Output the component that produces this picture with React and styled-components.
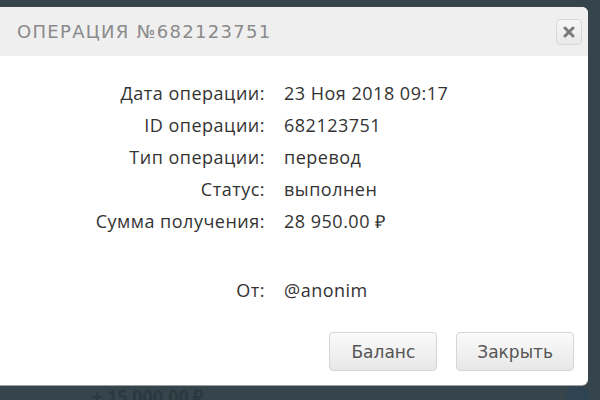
import React from "react"
import styled, { createGlobalStyle } from "styled-components"

const GlobalStyle = createGlobalStyle`
  html, body {
    margin: 0;
    padding: 0;
    background: #36454c;
    overflow: hidden;
  }
  #root {
    width: 600px;
    height: 400px;
  }
`

const Page = styled.div`
  width: 600px;
  height: 400px;
  padding-top: 7px;
  box-sizing: border-box;
  overflow: hidden;
`

const Modal = styled.div`
  width: 588px;
  height: 378px;
  background: #fff;
  border-radius: 0 6px 6px 0;
  box-shadow: 0 1px 0 #9aa0a3;
  display: flex;
  flex-direction: column;
  overflow: hidden;
`

const Header = styled.div`
  height: 49px;
  background: #efefef;
  display: flex;
  align-items: center;
  justify-content: space-between;
  padding: 0 6px 0 17px;
  flex-shrink: 0;
`

const Title = styled.h1`
  margin: 0;
  font-family: "DejaVu Sans", sans-serif;
  font-size: 18px;
  font-weight: 400;
  letter-spacing: 1.3px;
  color: #8a8a8a;
  text-transform: uppercase;
`

const CloseButton = styled.button`
  width: 26px;
  height: 26px;
  padding: 0;
  border: 1px solid #d8d8d8;
  border-radius: 4px;
  background: linear-gradient(#f6f6f6, #e9e9e9);
  display: flex;
  align-items: center;
  justify-content: center;
`

const Details = styled.div`
  display: grid;
  grid-template-columns: 265px auto;
  column-gap: 19px;
  margin-top: 21px;
  font-family: "Open Sans", sans-serif;
  font-size: 18px;
  font-weight: 500;
  letter-spacing: 0.5px;
  line-height: 32px;
  color: #333;
`

const Label = styled.div`
  text-align: right;
  margin-top: ${(p) => (p.$spaced ? "37px" : "0")};
`

const Value = styled.div`
  margin-top: ${(p) => (p.$spaced ? "37px" : "0")};
`

const Footer = styled.div`
  margin-top: auto;
  display: flex;
  justify-content: flex-end;
  gap: 19px;
  padding: 0 14px 14px 0;
`

const Button = styled.button`
  height: 39px;
  padding: 0 ${(p) => p.$pad}px;
  border: 1px solid #d6d6d6;
  border-radius: 4px;
  background: linear-gradient(#fafafa, #e8e8e8);
  font-family: "DejaVu Sans", sans-serif;
  font-size: 17px;
  color: #555;
`

const Behind = styled.div`
  height: 15px;
  display: flex;
  justify-content: space-between;
  align-items: flex-start;
  padding: 0 10px 0 92px;
  overflow: hidden;
`

const BehindAmount = styled.span`
  font-family: "Open Sans", sans-serif;
  font-size: 18px;
  font-weight: 700;
  color: #2a383f;
  margin-top: -1px;
`

const BehindBadge = styled.span`
  width: 24px;
  height: 18px;
  border-radius: 9px;
  background: #2e4452;
  margin-top: 2px;
`

const rows = [
  ["Дата операции:", "23 Ноя 2018 09:17"],
  ["ID операции:", "682123751"],
  ["Тип операции:", "перевод"],
  ["Статус:", "выполнен"],
  ["Сумма получения:", "28 950.00 ₽"],
]

const App = () => {
  return (
    <Page>
      <GlobalStyle />
      <Modal>
        <Header>
          <Title>Операция №682123751</Title>
          <CloseButton aria-label="close">
            <svg width="12" height="12" viewBox="0 0 12 12">
              <path d="M2 2 L10 10 M10 2 L2 10" stroke="#7a7a7a" strokeWidth="3" strokeLinecap="round" />
            </svg>
          </CloseButton>
        </Header>
        <Details>
          {rows.map(([label, value]) => (
            <React.Fragment key={label}>
              <Label>{label}</Label>
              <Value>{value}</Value>
            </React.Fragment>
          ))}
          <Label $spaced>От:</Label>
          <Value $spaced>@anonim</Value>
        </Details>
        <Footer>
          <Button $pad={21}>Баланс</Button>
          <Button $pad={20}>Закрыть</Button>
        </Footer>
      </Modal>
      <Behind>
        <BehindAmount>+ 15 000,00 ₽</BehindAmount>
        <BehindBadge />
      </Behind>
    </Page>
  )
}

export default App
